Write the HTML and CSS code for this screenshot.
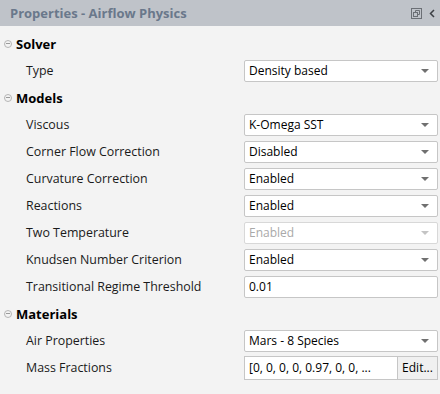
FILE: index.html
```html
<!DOCTYPE html>
<html lang="en">
<head>
  <meta charset="UTF-8">
  <title>Properties - Airflow Physics</title>
  <link rel="stylesheet" href="styles.css">
</head>
<body>
  <div class="panel">
    <div class="titlebar">
      <span class="title">Properties - Airflow Physics</span>
      <span class="tools">
        <svg width="11" height="11" viewBox="0 0 11 11">
          <rect x="0.5" y="0.5" width="10" height="10" fill="none" stroke="#6b6f75"/>
          <rect x="2.5" y="4.5" width="4" height="4" fill="none" stroke="#6b6f75"/>
          <path d="M4.5 4.5V2.5H8.5V6.5H6.5" fill="none" stroke="#6b6f75"/>
        </svg>
        <svg width="6" height="9" viewBox="0 0 6 9">
          <path d="M5 1L1.5 4.5L5 8" fill="none" stroke="#3c3f44" stroke-width="1.5"/>
        </svg>
      </span>
    </div>

    <div class="body">
      <div class="section"><span class="toggle"></span>Solver</div>
      <div class="row">
        <span class="label">Type</span>
        <div class="select">Density based<span class="arrow"></span></div>
      </div>

      <div class="section"><span class="toggle"></span>Models</div>
      <div class="row">
        <span class="label">Viscous</span>
        <div class="select">K-Omega SST<span class="arrow"></span></div>
      </div>
      <div class="row">
        <span class="label">Corner Flow Correction</span>
        <div class="select">Disabled<span class="arrow"></span></div>
      </div>
      <div class="row">
        <span class="label">Curvature Correction</span>
        <div class="select">Enabled<span class="arrow"></span></div>
      </div>
      <div class="row">
        <span class="label">Reactions</span>
        <div class="select">Enabled<span class="arrow"></span></div>
      </div>
      <div class="row">
        <span class="label">Two Temperature</span>
        <div class="select disabled">Enabled<span class="arrow"></span></div>
      </div>
      <div class="row">
        <span class="label">Knudsen Number Criterion</span>
        <div class="select">Enabled<span class="arrow"></span></div>
      </div>
      <div class="row">
        <span class="label">Transitional Regime Threshold</span>
        <div class="field">0.01</div>
      </div>

      <div class="section"><span class="toggle"></span>Materials</div>
      <div class="row">
        <span class="label">Air Properties</span>
        <div class="select">Mars - 8 Species<span class="arrow"></span></div>
      </div>
      <div class="row">
        <span class="label">Mass Fractions</span>
        <div class="combo">
          <div class="field short">[0, 0, 0, 0, 0.97, 0, 0, ...</div>
          <div class="button">Edit...</div>
        </div>
      </div>
    </div>
  </div>
</body>
</html>
```

FILE: styles.css
```css
body {
  margin: 0;
  background: #f3f3f3;
  font-family: "Open Sans", "Noto Sans", sans-serif;
  font-size: 12px;
  color: #1a1a1a;
}
.panel {
  width: 440px;
}
.titlebar {
  height: 26px;
  background: #bfc3c9;
  display: flex;
  align-items: center;
  justify-content: space-between;
  padding: 0 5px 0 10px;
}
.title {
  font-size: 13px;
  font-weight: bold;
  color: #6a788b;
}
.tools {
  display: flex;
  align-items: center;
  gap: 7px;
}
.body {
  padding-top: 4px;
}
.section {
  height: 27px;
  display: flex;
  align-items: center;
  font-weight: bold;
  font-size: 13px;
  color: #000;
  padding-left: 4px;
}
.toggle {
  width: 6px;
  height: 6px;
  border: 1px solid #b5b5b5;
  border-radius: 50%;
  margin-right: 4px;
  position: relative;
}
.toggle::after {
  content: "";
  position: absolute;
  left: 1px;
  top: 2.5px;
  width: 4px;
  height: 1px;
  background: #9a9a9a;
}
.row {
  height: 27px;
  display: flex;
  align-items: center;
}
.label {
  width: 218px;
  padding-left: 26px;
  font-size: 12.4px;
}
.select,
.field {
  height: 20px;
  border: 1px solid #c6c6c6;
  border-radius: 2px;
  background: #fff;
  display: flex;
  align-items: center;
  padding-left: 4px;
  position: relative;
  color: #000;
}
.select,
.field {
  width: 188px;
}
.arrow {
  position: absolute;
  right: 8px;
  top: 8px;
  border-left: 4px solid transparent;
  border-right: 4px solid transparent;
  border-top: 4px solid #707070;
}
.disabled {
  color: #a9a9a9;
  border-color: #d8d8d8;
}
.disabled .arrow {
  border-top-color: #c4c4c4;
}
.combo {
  display: flex;
}
.field.short {
  width: 148px;
  height: 22px;
  border-radius: 0;
}
.button {
  width: 39px;
  height: 22px;
  border: 1px solid #c6c6c6;
  border-left: none;
  background: #f0f0f0;
  display: flex;
  align-items: center;
  justify-content: center;
  color: #000;
}
```
